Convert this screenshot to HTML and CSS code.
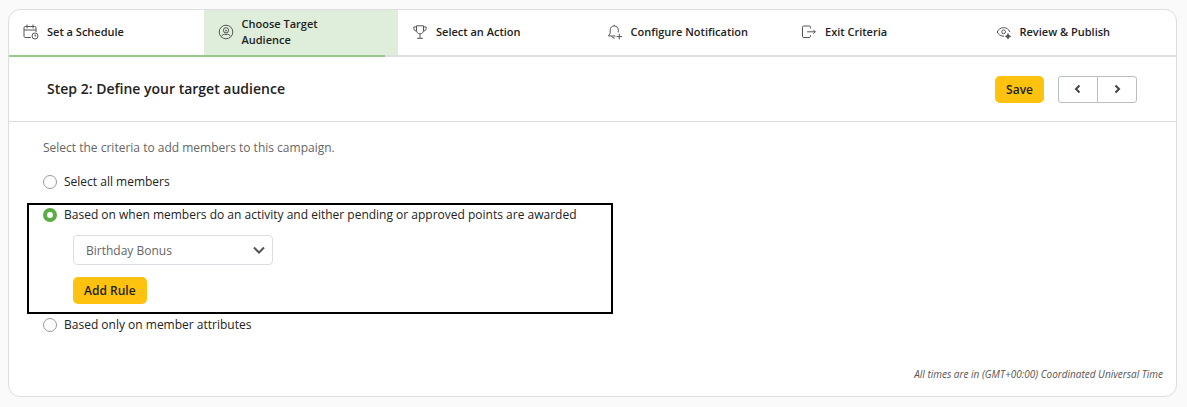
FILE: index.html
```
<!DOCTYPE html>
<html lang="en">
<head>
    <meta charset="UTF-8">
    <meta name="viewport" content="width=device-width, initial-scale=1.0">
    <title>Choose Target Audience</title>
    <link rel="stylesheet" href="styles.css">
</head>
<body>

    <main class="card">
        <nav class="steps">
            <a href="#schedule" class="step">
                <svg class="icon" viewBox="0 0 16 16">
                    <path d="M8 13.5H2.2Q1 13.5 1 12.3V3.7Q1 2.5 2.2 2.5H11.8Q13 2.5 13 3.7V8M1 6H13M4 .5V4.3M10 .5V4.3"/>
                    <circle cx="12" cy="12" r="3"/>
                    <path d="M12 10.5V12H13.3"/>
                </svg>
                <span>Set a Schedule</span>
            </a>
            <a href="#audience" class="step active">
                <svg class="icon" viewBox="0 0 16 16">
                    <circle cx="8" cy="8" r="6.8"/>
                    <circle cx="8" cy="6.3" r="2.6"/>
                    <path d="M3.8 12.2C4.2 10.8 5.4 10.4 6.7 10.2Q8 11.2 9.3 10.2C10.6 10.4 11.8 10.8 12.2 12.2"/>
                    <path d="M7 6.5Q8 7.4 9 6.5"/>
                </svg>
                <span>Choose Target Audience</span>
            </a>
            <a href="#action" class="step">
                <svg class="icon" viewBox="0 0 16 16">
                    <path d="M4.5 1.8H11.5V6C11.5 8.4 10.2 9.8 8 9.8S4.5 8.4 4.5 6ZM4.5 3H1.8V4.5Q1.8 6.8 4.6 7.2M11.5 3H14.2V4.5Q14.2 6.8 11.4 7.2M8 9.8V14M5 14.3H11"/>
                </svg>
                <span>Select an Action</span>
            </a>
            <a href="#notification" class="step">
                <svg class="icon" viewBox="0 0 16 16">
                    <path d="M8.5 12H1.5L3.2 9.2V6.2C3.2 3.6 4.8 2 7.2 2S11.3 3.6 11.3 6.2V8.4M7.2 2V.8M5 12.4Q5.4 14.3 7.8 14.2"/>
                    <path d="M12.3 9.8V15.4M9.5 12.6H15.1"/>
                </svg>
                <span>Configure Notification</span>
            </a>
            <a href="#exit" class="step">
                <svg class="icon" viewBox="0 0 16 16">
                    <path d="M9.5 4.5V3.2Q9.5 2 8.3 2H2.7Q1.5 2 1.5 3.2V12.3Q1.5 13.5 2.7 13.5H8.3Q9.5 13.5 9.5 12.3V11.2M6 7.8H14.3M12.3 5.8L14.3 7.8L12.3 9.8"/>
                </svg>
                <span>Exit Criteria</span>
            </a>
            <a href="#review" class="step">
                <svg class="icon" viewBox="0 0 16 16">
                    <path d="M8 12.2C4.6 12.2 2.4 10.4 1.2 8C2.4 5.4 4.8 3.6 7.6 3.6S12.8 5.3 14 8"/>
                    <circle cx="7.6" cy="7.8" r="1.9"/>
                    <path class="solid" d="M12 8.8L13.3 11.2L15.4 12.3L13.3 13.4L12 15.6L10.7 13.4L8.6 12.3L10.7 11.2Z"/>
                </svg>
                <span>Review &amp; Publish</span>
            </a>
        </nav>
        <div class="track">
            <div class="track-fill" style="width: 32.2%"></div>
        </div>

        <header class="step-header">
            <h1>Step 2: Define your target audience</h1>
            <div class="actions">
                <button type="button" class="btn-primary">Save</button>
                <div class="pager">
                    <button type="button" aria-label="Previous step">
                        <svg class="arrow" viewBox="0 0 10 10"><path d="M6.5 1.5L3 5L6.5 8.5"/></svg>
                    </button>
                    <button type="button" aria-label="Next step">
                        <svg class="arrow" viewBox="0 0 10 10"><path d="M3.5 1.5L7 5L3.5 8.5"/></svg>
                    </button>
                </div>
            </div>
        </header>

        <form class="criteria">
            <p class="hint">Select the criteria to add members to this campaign.</p>

            <div class="option">
                <input type="radio" id="all" name="criteria">
                <label for="all">Select all members</label>
            </div>

            <div class="highlight">
                <div class="option">
                    <input type="radio" id="activity" name="criteria" checked>
                    <label for="activity">Based on when members do an activity and either pending or approved points are awarded</label>
                </div>
                <div class="rule">
                    <div class="select-wrap">
                        <select id="rule" aria-label="Activity">
                            <option>Birthday Bonus</option>
                        </select>
                        <svg class="chevron" viewBox="0 0 12 8"><path d="M1 1.5L6 6.5L11 1.5"/></svg>
                    </div>
                    <button type="button" class="btn-primary">Add Rule</button>
                </div>
            </div>

            <div class="option">
                <input type="radio" id="attributes" name="criteria">
                <label for="attributes">Based only on member attributes</label>
            </div>
        </form>

        <p class="timezone">All times are in (GMT+00:00) Coordinated Universal Time</p>
    </main>

</body>
</html>
```
FILE: styles.css
```
* {
    box-sizing: border-box;
}

body {
    margin: 0;
    padding: 9px 10px 9px 8px;
    background-color: #fafafa;
    color: #222;
    font-family: "Open Sans", sans-serif;
    font-size: 12px;
    line-height: 16px;
}

button, select {
    font-family: inherit;
    font-size: 12px;
}

.card {
    background-color: #fff;
    border: 1px solid #dcdde0;
    border-radius: 12px;
    overflow: hidden;
}

.steps {
    display: grid;
    grid-template-columns: repeat(6, 1fr);
}

.step {
    display: flex;
    align-items: center;
    gap: 8px;
    height: 45px;
    padding: 0 14px 2px;
    color: #222;
    font-size: 11px;
    font-weight: 600;
    text-decoration: none;
}

.step span {
    max-width: 120px;
}

.step.active {
    background-color: #deeedb;
}

.icon {
    width: 16px;
    height: 16px;
    flex: none;
    fill: none;
    stroke: #555;
    stroke-width: 1;
}

.icon .solid {
    fill: #555;
    stroke: none;
}

.track {
    height: 2px;
    background-color: #dfdfdf;
}

.track-fill {
    height: 2px;
    background-color: #98c98c;
}

.step-header {
    display: flex;
    align-items: center;
    justify-content: space-between;
    height: 65px;
    padding: 0 39px 0 38px;
    border-bottom: 1px solid #dcdde0;
}

h1 {
    margin: 0;
    font-size: 14px;
    font-weight: 600;
}

.actions {
    display: flex;
    gap: 14px;
}

.btn-primary {
    height: 27px;
    padding: 0 11px;
    border: none;
    border-radius: 5px;
    background-color: #ffc20e;
    color: #222;
    font-weight: 600;
    cursor: pointer;
}

.pager {
    display: flex;
}

.pager button {
    display: flex;
    align-items: center;
    justify-content: center;
    width: 40px;
    height: 27px;
    padding: 0;
    border: 1px solid #b9bec3;
    border-radius: 3px 0 0 3px;
    background-color: #fff;
}

.pager button + button {
    margin-left: -1px;
    border-radius: 0 3px 3px 0;
}

.arrow {
    width: 10px;
    height: 10px;
    fill: none;
    stroke: #444;
    stroke-width: 2;
}

.criteria {
    padding: 18px 34px 0;
}

.hint {
    margin: 0 0 18px;
    color: #666;
}

.option {
    display: flex;
    align-items: center;
    gap: 7px;
}

.option input {
    appearance: none;
    width: 14px;
    height: 14px;
    margin: 0;
    border: 1px solid #999;
    border-radius: 50%;
    background-color: #fff;
}

.option input:checked {
    border: 4px solid #5aac44;
}

.highlight {
    width: fit-content;
    margin: 13px 0 3px -16px;
    padding: 2px 35px 8px 14px;
    border: 2px solid #000;
}

.rule {
    display: flex;
    flex-direction: column;
    align-items: flex-start;
    gap: 12px;
    padding: 12px 0 0 30px;
}

.select-wrap {
    display: grid;
    align-items: center;
    width: 200px;
}

.select-wrap select, .chevron {
    grid-area: 1 / 1;
}

.select-wrap select {
    appearance: none;
    width: 100%;
    height: 30px;
    padding: 0 12px;
    border: 1px solid #dcdde3;
    border-radius: 4px;
    background-color: #fff;
    color: #666;
}

.chevron {
    justify-self: end;
    width: 12px;
    height: 8px;
    margin-right: 8px;
    fill: none;
    stroke: #555;
    stroke-width: 2;
    pointer-events: none;
}

.timezone {
    margin: 33px 13px 14px;
    color: #555;
    font-size: 10px;
    font-style: italic;
    text-align: right;
}
```
